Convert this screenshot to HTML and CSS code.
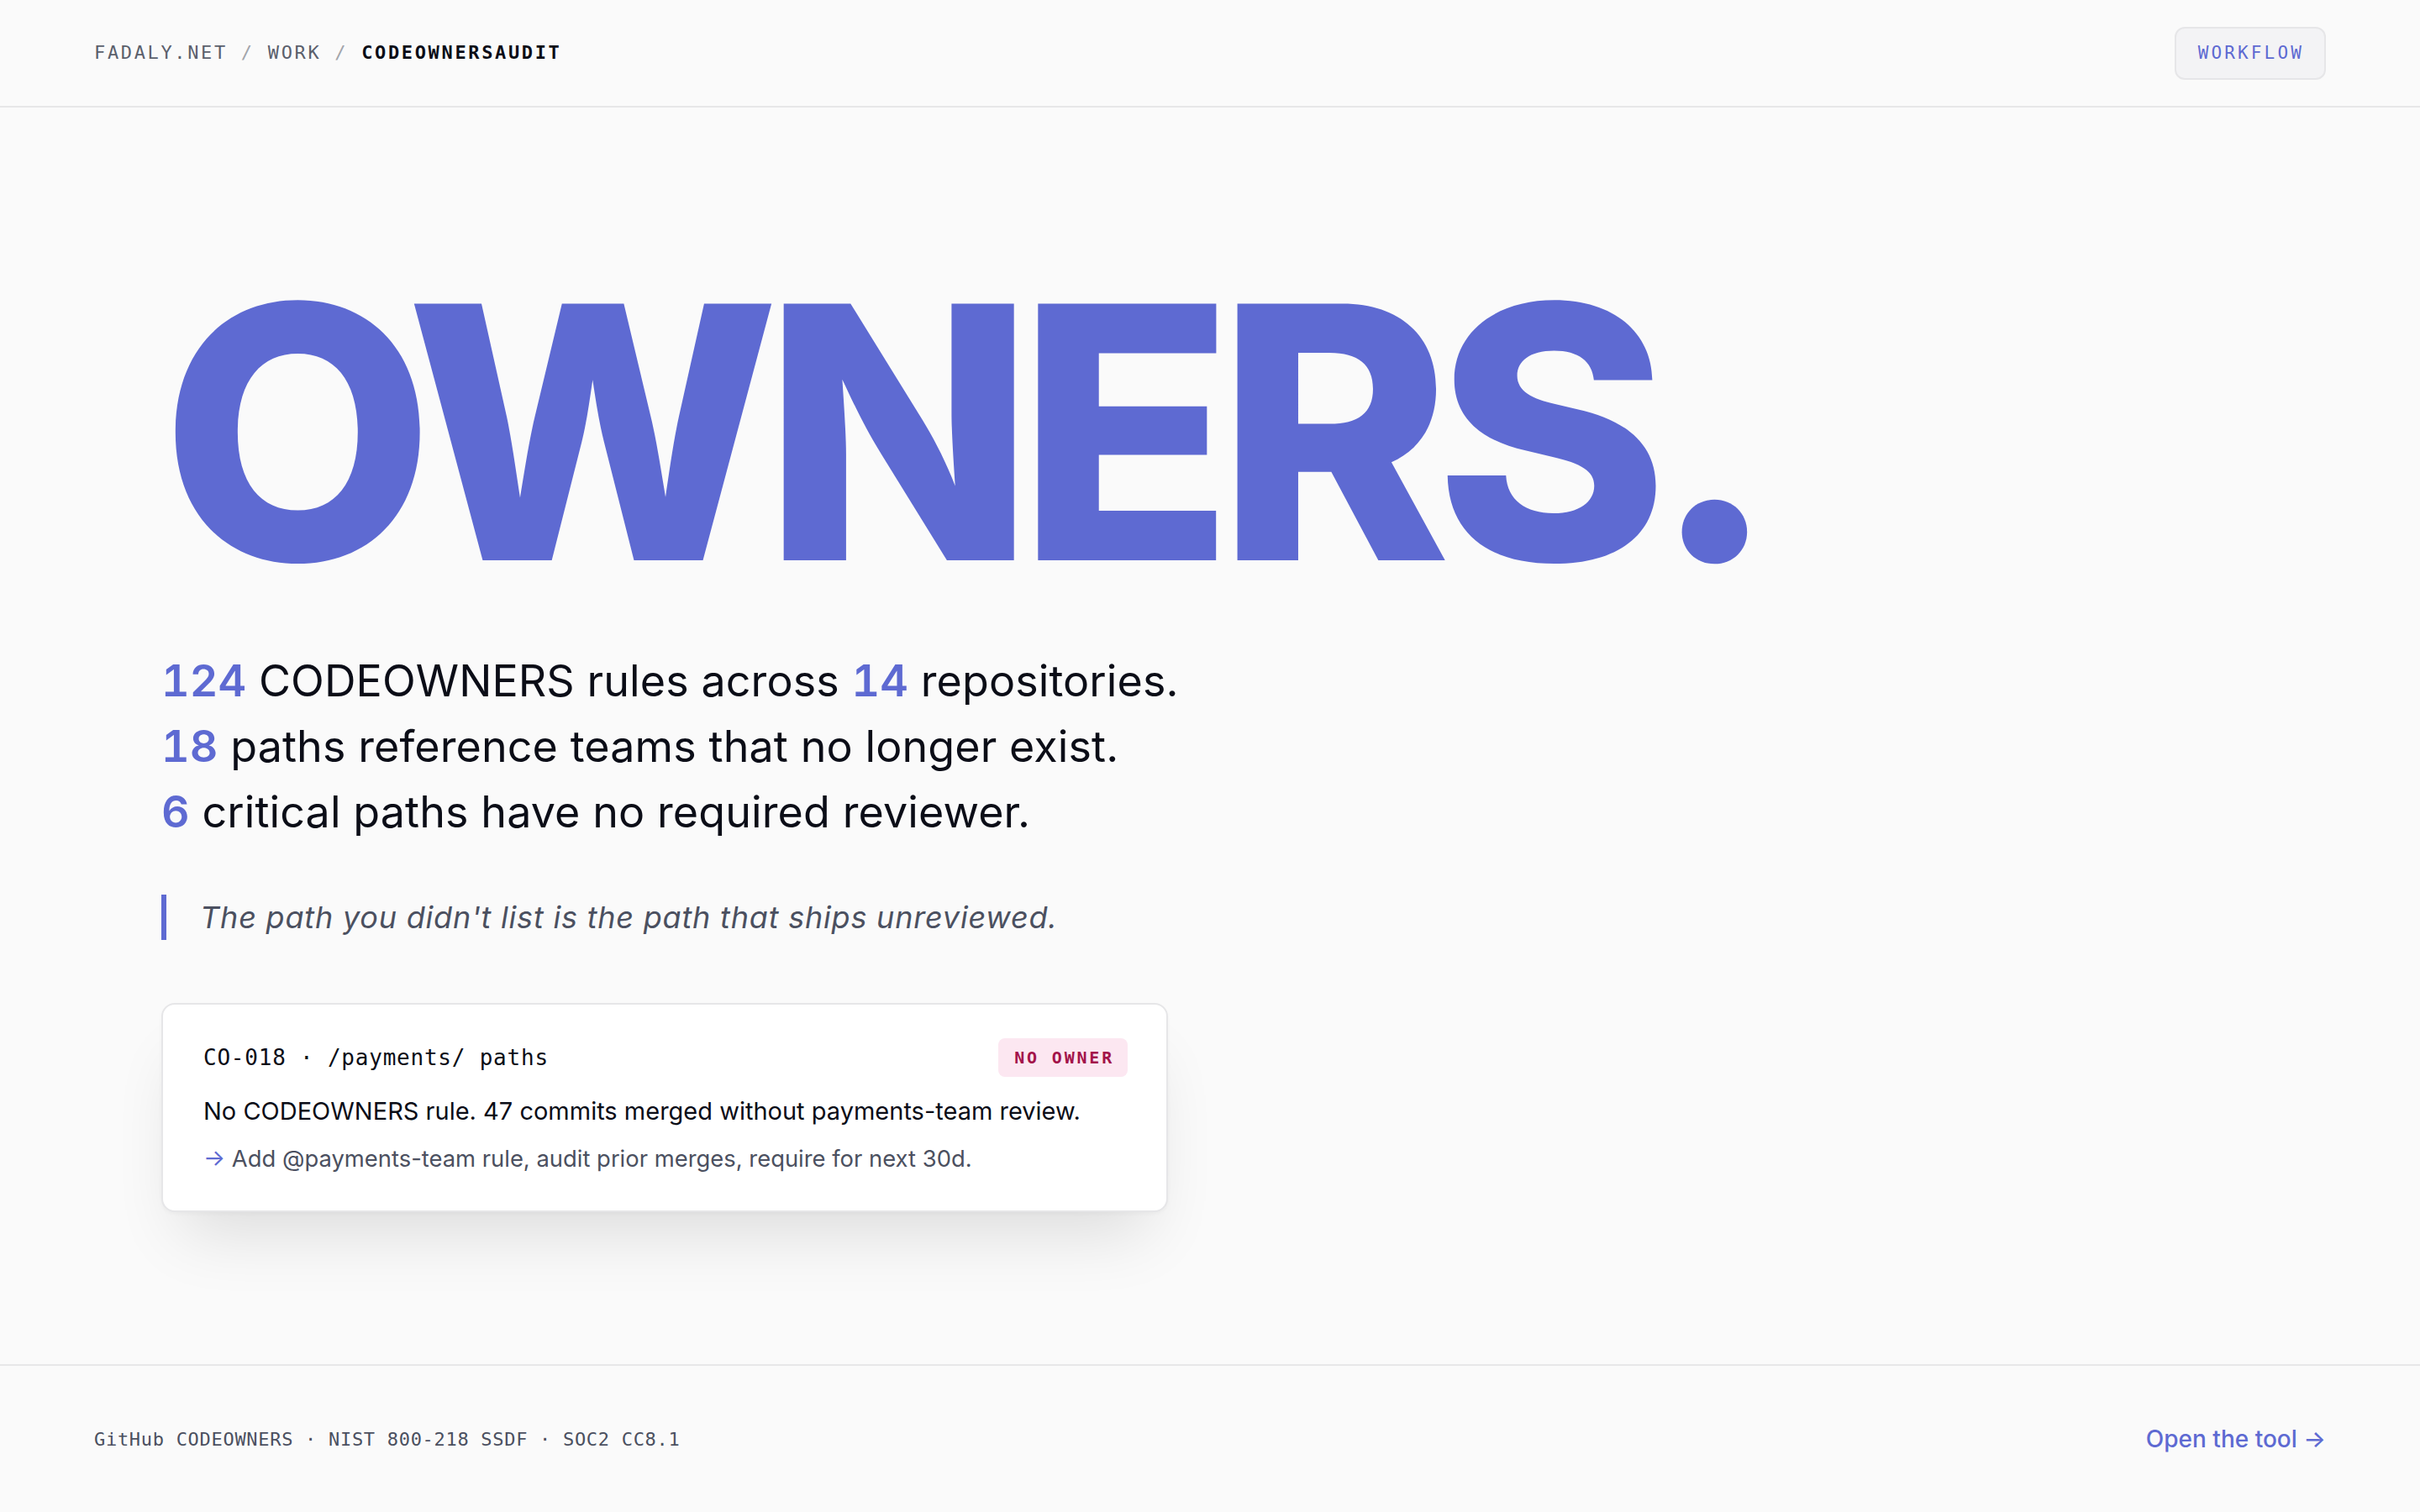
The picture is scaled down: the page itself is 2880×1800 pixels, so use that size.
FILE: index.html
```html
<!DOCTYPE html>
<html lang="en">
<head>
<meta charset="utf-8">
<title>CODEOWNERS Audit</title>
<link rel="stylesheet" href="styles.css">
</head>
<body>
<header class="topbar">
  <nav class="crumbs">
    <span class="crumb">FADALY.NET</span>
    <span class="sep">/</span>
    <span class="crumb">WORK</span>
    <span class="sep">/</span>
    <span class="crumb current">CODEOWNERSAUDIT</span>
  </nav>
  <a class="tag-btn" href="#">WORKFLOW</a>
</header>

<main class="main">
  <h1 class="hero">OWNERS.</h1>

  <div class="stats">
    <p class="stat"><b class="num">124</b> CODEOWNERS rules across <b class="num">14</b> repositories.</p>
    <p class="stat"><b class="num">18</b> paths reference teams that no longer exist.</p>
    <p class="stat"><b class="num">6</b> critical paths have no required reviewer.</p>
  </div>

  <blockquote class="quote">The path you didn't list is the path that ships unreviewed.</blockquote>

  <article class="card">
    <div class="card-head">
      <span class="card-title">CO-018 · /payments/ paths</span>
      <span class="badge">NO OWNER</span>
    </div>
    <p class="card-body">No CODEOWNERS rule. 47 commits merged without payments-team review.</p>
    <p class="card-action"><span class="arrow">→</span> Add @payments-team rule, audit prior merges, require for next 30d.</p>
  </article>
</main>

<footer class="footer">
  <span class="refs">GitHub CODEOWNERS · NIST 800-218 SSDF · SOC2 CC8.1</span>
  <a class="cta" href="#">Open the tool →</a>
</footer>
</body>
</html>
```

FILE: styles.css
```css
* { box-sizing: border-box; }

html, body {
  margin: 0;
  padding: 0;
}

body {
  background: #fafafa;
  color: #0b0d17;
  font-family: Inter, "Noto Sans", "Liberation Sans", sans-serif;
  min-height: 100vh;
  display: flex;
  flex-direction: column;
}

a { text-decoration: none; }

.topbar {
  height: 128px;
  border-bottom: 2px solid #e7e7e8;
  display: flex;
  align-items: center;
  justify-content: space-between;
  padding: 0 112px;
}

.crumbs {
  display: flex;
  align-items: center;
  gap: 16px;
  font-family: "DejaVu Sans Mono", "Liberation Mono", monospace;
  font-size: 22px;
  letter-spacing: 0.12em;
  line-height: 30px;
}

.crumb { color: #5b606c; }
.sep { color: #a2a4aa; }
.crumb.current { color: #0b0d17; font-weight: 600; }

.tag-btn {
  font-family: "DejaVu Sans Mono", "Liberation Mono", monospace;
  font-size: 21px;
  letter-spacing: 0.15em;
  line-height: 26px;
  color: #5e6ad2;
  background: #f3f3f5;
  border: 2px solid #e6e6e8;
  border-radius: 12px;
  padding: 16px 24px 17px 26px;
}

.main {
  flex: 1;
  padding: 197px 192px 0;
}

.hero {
  margin: 0 0 69px;
  font-family: Inter, sans-serif;
  font-weight: 800;
  font-size: 420px;
  line-height: 0.9;
  letter-spacing: -0.045em;
  color: #5e6ad2;
}

.stats { margin: 0; }

.stat {
  margin: 0;
  font-size: 52px;
  line-height: 78px;
  font-weight: 400;
  color: #0b0d17;
  letter-spacing: 0.002em;
}

.num {
  color: #5e6ad2;
  font-weight: 600;
  font-variant-numeric: tabular-nums;
  font-feature-settings: "tnum" 1;
}

.quote {
  margin: 59px 0 0;
  border-left: 6px solid #5e6ad2;
  padding-left: 40px;
  font-size: 36px;
  line-height: 54px;
  font-style: italic;
  letter-spacing: 0.022em;
  color: #4b5060;
}

.card {
  margin-top: 75px;
  width: 1198px;
  background: #ffffff;
  border: 2px solid #e6e6e8;
  border-radius: 16px;
  padding: 40px 46px 42px 48px;
  box-shadow: 0 2px 4px rgba(0,0,0,0.03), 0 48px 80px -24px rgba(0,0,0,0.12);
}

.card-head {
  display: flex;
  align-items: center;
  justify-content: space-between;
}

.card-title {
  font-family: "DejaVu Sans Mono", "Liberation Mono", monospace;
  font-size: 26px;
  letter-spacing: 0.03em;
  color: #0b0d17;
}

.badge {
  font-family: "DejaVu Sans Mono", "Liberation Mono", monospace;
  font-size: 20px;
  line-height: 26px;
  letter-spacing: 0.14em;
  color: #a3134a;
  background: #fce7f1;
  border-radius: 8px;
  padding: 10px 16px 10px 19px;
  font-weight: 600;
}

.card-body {
  margin: 18px 0 0;
  font-size: 29px;
  line-height: 45px;
  color: #0b0d17;
}

.card-action {
  margin: 15px 0 0;
  font-size: 27.4px;
  line-height: 39px;
  color: #4b5060;
}

.arrow { color: #5e6ad2; }

.footer {
  border-top: 2px solid #e7e7e8;
  display: flex;
  align-items: center;
  justify-content: space-between;
  padding: 64px 112px;
  height: 176px;
}

.refs {
  font-family: "DejaVu Sans Mono", "Liberation Mono", monospace;
  font-size: 22px;
  letter-spacing: 0.032em;
  color: #4b5060;
}

.cta {
  font-size: 28px;
  font-weight: 500;
  color: #5e6ad2;
  line-height: 45px;
}
```
